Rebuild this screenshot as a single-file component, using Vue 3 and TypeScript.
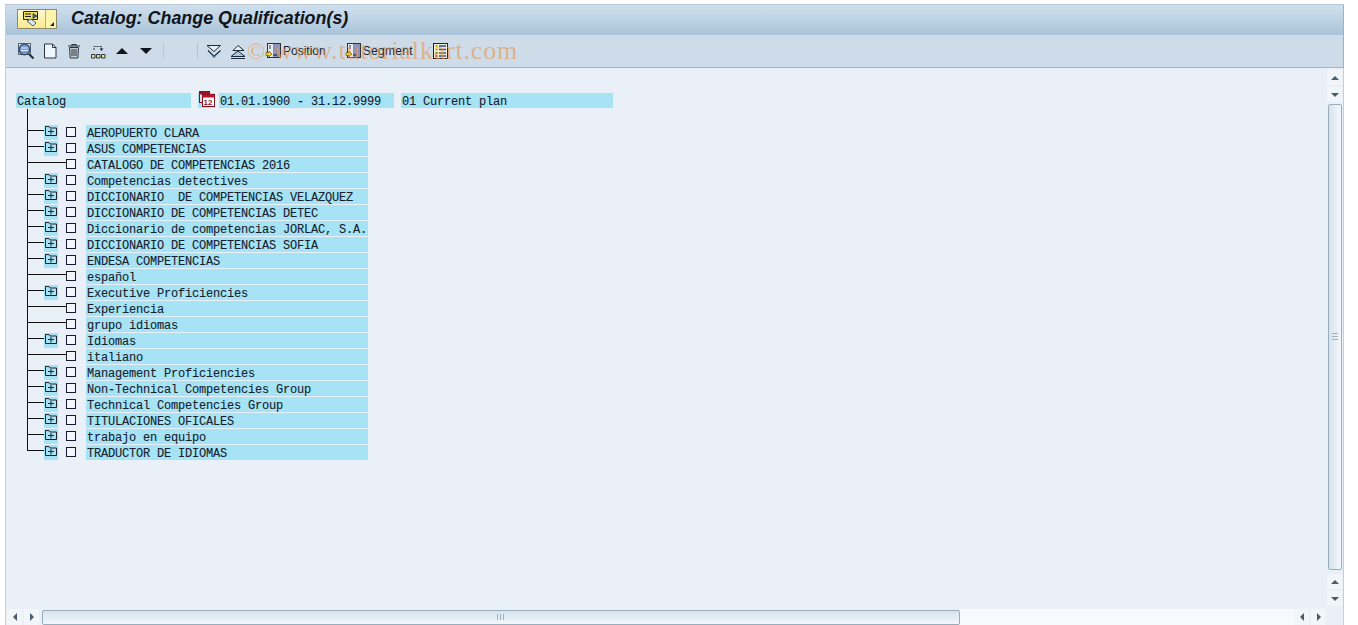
<script setup lang="ts">
interface Row { label: string; expandable: boolean }
const rows: Row[] = [
  { label: 'AEROPUERTO CLARA', expandable: true },
  { label: 'ASUS COMPETENCIAS', expandable: true },
  { label: 'CATALOGO DE COMPETENCIAS 2016', expandable: false },
  { label: 'Competencias detectives', expandable: true },
  { label: 'DICCIONARIO  DE COMPETENCIAS VELAZQUEZ', expandable: true },
  { label: 'DICCIONARIO DE COMPETENCIAS DETEC', expandable: true },
  { label: 'Diccionario de competencias JORLAC, S.A.', expandable: true },
  { label: 'DICCIONARIO DE COMPETENCIAS SOFIA', expandable: true },
  { label: 'ENDESA COMPETENCIAS', expandable: true },
  { label: 'español', expandable: false },
  { label: 'Executive Proficiencies', expandable: true },
  { label: 'Experiencia', expandable: false },
  { label: 'grupo idiomas', expandable: false },
  { label: 'Idiomas', expandable: true },
  { label: 'italiano', expandable: false },
  { label: 'Management Proficiencies', expandable: true },
  { label: 'Non-Technical Competencies Group', expandable: true },
  { label: 'Technical Competencies Group', expandable: true },
  { label: 'TITULACIONES OFICALES', expandable: true },
  { label: 'trabajo en equipo', expandable: true },
  { label: 'TRADUCTOR DE IDIOMAS', expandable: true },
]
</script>

<template>
  <div class="page">
    <div class="window">
      <header class="titlebar">
        <div class="menu-btn">
          <span class="menu-icon">
            <svg width="20" height="16" viewBox="0 0 20 16">
              <path d="M1.500 .5h14v8h-7l-2 2v-2h-5z" fill="#f6e25a" stroke="#222" />
              <path d="M3 3h6M3 5.500h6" stroke="#222" />
              <path d="M5 10l4-2 5 4-3 3z" fill="#dfe8f2" stroke="#44607c" />
              <path d="M11 2.500l4 2.500-4 2.500z" fill="#2d6fb0" stroke="#123" stroke-width=".6" />
            </svg>
          </span>
          <span class="menu-caret">
            <svg width="7" height="7" viewBox="0 0 7 7"><path d="M6 2v4H2z" fill="#222" /></svg>
          </span>
        </div>
        <h1 class="title">Catalog: Change Qualification(s)</h1>
      </header>

      <div class="toolbar">
        <button class="tool first" aria-label="Display">
          <svg width="18" height="18" viewBox="0 0 18 18">
            <rect x="1.500" y="1.500" width="12" height="11" fill="#dbe4ee" stroke="#56626e" />
            <circle cx="7.500" cy="7.500" r="5.300" fill="#6f9be0" stroke="#3c4c5c" stroke-width="1.300" />
            <path d="M4 6h7M4 8.500h7" stroke="#e8f0fa" />
            <path d="M12 12l4.500 4.500" stroke="#27333f" stroke-width="2.200" />
          </svg>
        </button>
        <button class="tool" aria-label="Create">
          <svg width="14" height="16" viewBox="0 0 14 16">
            <path d="M1.500 1h8l3.500 3.500V15H1.500z" fill="#f0f6fd" stroke="#2a3440" />
            <path d="M9.500 1v3.500H13" fill="none" stroke="#2a3440" />
          </svg>
        </button>
        <button class="tool" aria-label="Delete">
          <svg width="14" height="16" viewBox="0 0 14 16">
            <path d="M1 3h12M5 3V1.500h4V3" fill="none" stroke="#2a3440" stroke-width="1.200" />
            <path d="M2.500 4.500h9l-.7 10.500H3.200z" fill="#c6cdd4" stroke="#2a3440" />
            <path d="M5 6v7M7 6v7M9 6v7" stroke="#2a3440" />
          </svg>
        </button>
        <button class="tool" aria-label="Reassign">
          <svg width="16" height="15" viewBox="0 0 16 15">
            <path d="M4 6V2.500h7.500V6" fill="none" stroke="#2a3440" stroke-dasharray="2 1" />
            <path d="M9.500 4.500h4L11.500 7z" fill="#2a3440" />
            <path d="M1.500 10.500h3.500v3.500H1.500zM6.500 10.500H10v3.500H6.500zM11.500 10.500H15v3.500h-3.500z" fill="#f1e28d" stroke="#2a3440" />
          </svg>
        </button>
        <button class="tool arrow" aria-label="Previous"><span class="tri-up"></span></button>
        <button class="tool arrow" aria-label="Next"><span class="tri-down"></span></button>
        <span class="sep sep-a"></span>
        <span class="sep sep-b"></span>
        <button class="tool exp" aria-label="Expand">
          <svg width="16" height="15" viewBox="0 0 16 15">
            <path d="M1 1.500h13.500L8 7.500z" fill="#e6eff8" stroke="#1e2a38" />
            <path d="M2 6.500l6 6 6.500-6" fill="none" stroke="#1e2a38" stroke-width="1.200" />
            <path d="M6 12.500l2 1 2-1" stroke="#6f9ccc" fill="none" />
          </svg>
        </button>
        <button class="tool col" aria-label="Collapse">
          <svg width="16" height="15" viewBox="0 0 16 15">
            <path d="M8 1.500l-5 5h11z" fill="#e6eff8" stroke="#1e2a38" />
            <path d="M1 12.500L8 7l7 5.500z" fill="#a9c8e8" stroke="#1e2a38" />
            <path d="M1 14.500h14" stroke="#1e2a38" />
          </svg>
        </button>
        <button class="tool text pos">
          <svg class="doc-ic" width="17" height="16" viewBox="0 0 17 16">
            <rect x="2.500" y=".5" width="13" height="14" fill="#e9eef4" stroke="#333" />
            <rect x="8" y="1" width="7" height="13" fill="#8b94b8" />
            <path d="M4 3h2M4 5h2" stroke="#333" />
            <path d="M1 9.500h3V8l3 3-3 3v-1.500H1z" fill="#f4d020" stroke="#5a4800" stroke-width=".6" />
            <path d="M8 12h4" stroke="#111" />
          </svg>
          Position
        </button>
        <button class="tool text seg">
          <svg class="doc-ic" width="17" height="16" viewBox="0 0 17 16">
            <rect x="2.500" y=".5" width="13" height="14" fill="#e9eef4" stroke="#333" />
            <rect x="8" y="1" width="7" height="13" fill="#8b94b8" />
            <path d="M4 3h2M4 5h2" stroke="#333" />
            <path d="M1 9.500h3V8l3 3-3 3v-1.500H1z" fill="#f4d020" stroke="#5a4800" stroke-width=".6" />
            <path d="M8 12h4" stroke="#111" />
          </svg>
          Segment
        </button>
        <button class="tool list" aria-label="Details">
          <svg width="15" height="16" viewBox="0 0 15 16">
            <rect x=".5" y=".5" width="14" height="15" fill="#f2f0d8" stroke="#222" />
            <path d="M2.500 3h2M2.500 6.500h2" stroke="#c7a800" stroke-width="2" />
            <path d="M2.500 10h2" stroke="#2f8f3a" stroke-width="2" />
            <path d="M2.500 13h2" stroke="#c23" stroke-width="2" />
            <path d="M6 3h7M6 6.500h7M6 10h7M6 13h7" stroke="#2b4f8c" stroke-width="1.300" />
          </svg>
        </button>
        <div class="watermark"><span class="copy">©</span>www.tutorialkart.com</div>
      </div>

      <div class="body">
        <main class="content">
          <div class="head-row">
            <span class="band head-catalog">Catalog</span>
            <span class="cal">
              <svg width="16" height="16" viewBox="0 0 16 16">
                <rect x=".5" y=".5" width="10" height="11" fill="#e8e0e0" stroke="#7a1020" />
                <rect x=".5" y=".5" width="10" height="3" fill="#9c1428" />
                <rect x="3.500" y="3.500" width="12" height="12" fill="#fff" stroke="#7a1020" />
                <rect x="3.500" y="3.500" width="12" height="3" fill="#b5162c" />
                <text x="4.500" y="14" class="cal-num">12</text>
              </svg>
            </span>
            <span class="band head-dates">01.01.1900 - 31.12.9999</span>
            <span class="band head-plan">01 Current plan</span>
          </div>
          <div class="tree">
            <div v-for="(row, i) in rows" :key="i" class="row" :class="{ last: i === rows.length - 1 }">
              <template v-if="row.expandable">
                <span class="stub"></span>
                <span class="exp-cell">
                  <svg width="12" height="10" viewBox="0 0 12 10">
                    <path d="M.5 2V.5H4l1 1.500h6.500v7.500H.5z" fill="none" stroke="#1c2430" />
                    <path d="M6 3v5.500M3 5.500h6" stroke="#1c2430" />
                  </svg>
                </span>
                <span class="gap"></span>
              </template>
              <span v-else class="stub long"></span>
              <span class="check"></span>
              <span class="band label">{{ row.label }}</span>
            </div>
          </div>
        </main>
        <aside class="vscroll">
          <span class="sbtn"><span class="sb-up"></span></span>
          <span class="sbtn"><span class="sb-down"></span></span>
          <div class="vthumb"><span class="vgrip"></span></div>
          <span class="sbtn"><span class="sb-up"></span></span>
          <span class="sbtn"><span class="sb-down"></span></span>
        </aside>
      </div>

      <footer class="hscroll">
        <span class="hbtn"><span class="sb-left"></span></span>
        <span class="hbtn"><span class="sb-right"></span></span>
        <div class="hthumb"><span class="hgrip"></span></div>
        <div class="htrack"></div>
        <span class="hbtn"><span class="sb-left"></span></span>
        <span class="hbtn"><span class="sb-right"></span></span>
        <span class="hcorner"></span>
      </footer>
    </div>
  </div>
</template>

<style>
html, body { margin: 0; background: #fff; overflow: hidden; }
</style>

<style scoped>
.page {
  width: 1358px;
  height: 625px;
  padding: 4px 14px 0 5px;
  box-sizing: border-box;
  background: #fff;
  overflow: hidden;
}
.window {
  height: 621px;
  display: flex;
  flex-direction: column;
  background: #e9f0f8;
  border-left: 1px solid #c5d0da;
  border-top: 1px solid #b9c8d6;
  box-sizing: border-box;
}
.titlebar {
  height: 30px;
  flex: none;
  display: flex;
  align-items: center;
  padding: 0 0 2px 11px;
  box-sizing: border-box;
  background: linear-gradient(#d0e0ed, #a9c3d9);
  border-right: 1px solid #9fb2c4;
}
.menu-btn {
  display: flex;
  width: 40px;
  height: 20px;
  border: 1px solid #8b8a70;
  background: #fdf3ac;
  box-sizing: border-box;
}
.menu-icon {
  width: 27px;
  display: flex;
  align-items: center;
  justify-content: center;
  background: linear-gradient(#fffbd6, #fae98a);
  border-right: 1px solid #b6b08a;
}
.menu-caret {
  flex: 1;
  display: flex;
  align-items: flex-end;
  justify-content: center;
  padding-bottom: 1px;
}
.title {
  margin: 0 0 1px 14px;
  font: italic bold 17.9px "Liberation Sans", Arial, sans-serif;
  color: #10151c;
  white-space: nowrap;
}
.toolbar {
  position: relative;
  height: 33px;
  flex: none;
  display: flex;
  align-items: center;
  padding-left: 11px;
  background: #cddce8;
  border-right: 1px solid #9fb2c4;
  border-bottom: 1px solid #a3b6c7;
  box-sizing: border-box;
  overflow: hidden;
}
.tool {
  display: flex;
  align-items: center;
  justify-content: center;
  border: 0;
  padding: 0;
  background: none;
  height: 18px;
  font: 12px "Liberation Sans", Arial, sans-serif;
  color: #14202c;
  flex: none;
}
.tool.first { width: 18px; }
.tool:nth-child(2) { width: 14px; margin-left: 8px; }
.tool:nth-child(3) { width: 14px; margin-left: 10px; }
.tool:nth-child(4) { width: 16px; margin-left: 9px; }
.tool.arrow { width: 14px; margin-left: 9px; }
.tool.arrow:nth-child(6) { margin-left: 10px; }
.tri-up, .tri-down, .sb-up, .sb-down, .sb-left, .sb-right {
  display: block;
  width: 0;
  height: 0;
}
.tri-up { border: 6px solid transparent; border-top: 0; border-bottom: 6px solid #10161c; }
.tri-down { border: 6px solid transparent; border-bottom: 0; border-top: 6px solid #10161c; }
.sep { width: 1px; height: 16px; background: #b5c8d8; flex: none; }
.sep-a { margin-left: 10px; }
.sep-b { margin-left: 33px; }
.tool.exp { width: 16px; margin-left: 8px; }
.tool.col { width: 16px; margin-left: 8px; }
.tool.text { gap: 1px; }
.tool.pos { margin-left: 19px; }
.tool.seg { margin-left: 19px; letter-spacing: .3px; }
.tool.list { width: 15px; margin-left: 20px; }
.doc-ic { flex: none; }
.watermark {
  position: absolute;
  left: 241px;
  top: 1px;
  font: 26px "Liberation Serif", "Times New Roman", serif;
  letter-spacing: .8px;
  color: rgba(232, 150, 80, .62);
  white-space: nowrap;
  pointer-events: none;
}
.copy { font-size: 24px; margin-right: 8px; }
.body {
  flex: 1;
  min-height: 0;
  display: flex;
}
.content {
  flex: 1;
  min-width: 0;
  padding: 25px 0 0 10px;
  font: 12px "Liberation Mono", "Courier New", monospace;
  letter-spacing: -.2px;
  color: #16202e;
  -webkit-text-stroke: .1px #16202e;
}
.band {
  display: block;
  height: 15px;
  line-height: 19px;
  background: #a6e4f5;
  white-space: pre;
  box-sizing: border-box;
  padding-left: 1px;
}
.head-row { display: flex; height: 15px; }
.head-catalog { width: 175px; }
.cal {
  width: 17px;
  height: 15px;
  margin-left: 7px;
  background: #a6e4f5;
  display: flex;
  justify-content: center;
}
.cal svg { margin-top: -2px; }
.cal-num {
  font: bold 8px "Liberation Sans", Arial, sans-serif;
  letter-spacing: 0;
  fill: #a01024;
  -webkit-text-stroke: 0;
}
.head-dates { width: 175px; margin-left: 4px; }
.head-plan { width: 212px; margin-left: 7px; }
.tree {
  position: relative;
  margin-top: 1px;
  padding-top: 16px;
  margin-left: 11px;
  background: linear-gradient(#111, #111) 0 0 / 1px 16px no-repeat;
}
.row {
  display: flex;
  align-items: flex-start;
  height: 16px;
  background: linear-gradient(#111, #111) 0 0 / 1px 100% no-repeat;
}
.row.last { background-size: 1px 6px; }
.stub {
  width: 17px;
  height: 6px;
  flex: none;
  border-bottom: 1px solid #111;
  box-sizing: border-box;
}
.stub.long { width: 39px; }
.exp-cell {
  width: 14px;
  height: 15px;
  background: #a6e4f5;
  flex: none;
  display: flex;
  justify-content: center;
  padding-top: 1px;
  box-sizing: border-box;
}
.gap { width: 8px; flex: none; }
.check {
  width: 10px;
  height: 10px;
  margin-top: 2px;
  flex: none;
  box-sizing: border-box;
  border: 1px solid #1a1a2e;
  background: #f2f6fa;
}
.label { width: 282px; margin-left: 10px; }
.vscroll {
  width: 15px;
  padding: 2px 1px 0 0;
  flex: none;
  display: flex;
  flex-direction: column;
  align-items: center;
  border-right: 1px solid #c5d0da;
}
.sbtn {
  width: 15px;
  height: 15px;
  margin-bottom: 2px;
  flex: none;
  display: flex;
  align-items: center;
  justify-content: center;
  background: #f2f6fb;
}
.sb-up { border: 4.500px solid transparent; border-top: 0; border-bottom: 4.500px solid #465b70; }
.sb-down { border: 4.500px solid transparent; border-bottom: 0; border-top: 4.500px solid #465b70; }
.sb-left { border: 4.500px solid transparent; border-left: 0; border-right: 4.500px solid #465b70; }
.sb-right { border: 4.500px solid transparent; border-right: 0; border-left: 4.500px solid #465b70; }
.vthumb {
  width: 14px;
  height: 466px;
  margin: 0 0 4px;
  flex: none;
  box-sizing: border-box;
  border: 1px solid #9aadbd;
  border-radius: 2px;
  background: linear-gradient(90deg, #d6e3ee, #f3f7fb);
  display: flex;
  align-items: center;
  justify-content: center;
}
.vgrip {
  width: 6px;
  height: 8px;
  background: repeating-linear-gradient(#9db0c0 0 1px, transparent 1px 3px);
}
.hscroll {
  height: 16px;
  flex: none;
  display: flex;
  align-items: center;
  padding-left: 1px;
  border-right: 1px solid #c5d0da;
}
.hbtn {
  width: 15px;
  height: 16px;
  margin-right: 2px;
  flex: none;
  display: flex;
  align-items: center;
  justify-content: center;
  background: #f2f6fb;
}
.hthumb {
  width: 918px;
  height: 15px;
  margin-left: 1px;
  flex: none;
  box-sizing: border-box;
  border: 1px solid #9aadbd;
  border-radius: 2px;
  background: linear-gradient(#d6e3ee, #f3f7fb);
  display: flex;
  align-items: center;
  justify-content: center;
}
.hgrip {
  width: 8px;
  height: 6px;
  background: repeating-linear-gradient(90deg, #9db0c0 0 1px, transparent 1px 3px);
}
.htrack {
  width: 334px;
  height: 16px;
  flex: none;
  background: #f7fafd;
}
.hcorner { flex: 1; }
</style>
